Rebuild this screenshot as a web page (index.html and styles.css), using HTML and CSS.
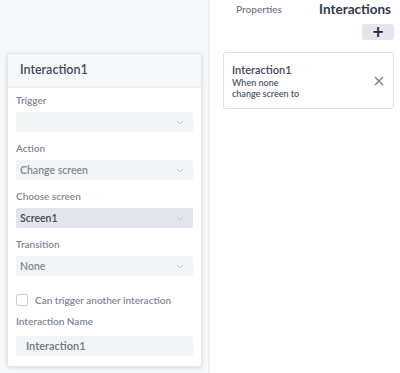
FILE: index.html
```html
<!DOCTYPE html>
<html lang="en">
<head>
  <meta charset="UTF-8">
  <title>Interactions</title>
  <link rel="stylesheet" href="styles.css">
</head>
<body>
  <div class="canvas">
    <div class="popup">
      <div class="popup-header">Interaction1</div>
      <div class="popup-body">
        <div class="field-label">Trigger</div>
        <div class="select"><span></span><svg class="chev" width="8" height="5" viewBox="0 0 8 5"><path d="M1 1l3 3 3-3" fill="none" stroke="#c3c9d0" stroke-width="1"/></svg></div>

        <div class="field-label">Action</div>
        <div class="select"><span>Change screen</span><svg class="chev" width="8" height="5" viewBox="0 0 8 5"><path d="M1 1l3 3 3-3" fill="none" stroke="#c3c9d0" stroke-width="1"/></svg></div>

        <div class="field-label">Choose screen</div>
        <div class="select active"><span>Screen1</span><svg class="chev" width="8" height="5" viewBox="0 0 8 5"><path d="M1 1l3 3 3-3" fill="none" stroke="#c3c9d0" stroke-width="1"/></svg></div>

        <div class="field-label">Transition</div>
        <div class="select"><span>None</span><svg class="chev" width="8" height="5" viewBox="0 0 8 5"><path d="M1 1l3 3 3-3" fill="none" stroke="#c3c9d0" stroke-width="1"/></svg></div>

        <label class="check-row"><span class="checkbox"></span>Can trigger another interaction</label>

        <div class="field-label name-label">Interaction Name</div>
        <div class="text-input">Interaction1</div>
      </div>
    </div>
  </div>

  <div class="sidebar">
    <div class="tabs">
      <span class="tab">Properties</span>
      <span class="tab current">Interactions</span>
    </div>
    <div class="add-row">
      <button class="add-btn">+</button>
    </div>
    <div class="interaction-card">
      <div class="card-text">
        <div class="card-title">Interaction1</div>
        <div class="card-sub">When none</div>
        <div class="card-sub">change screen to</div>
      </div>
      <svg class="close" width="10" height="10" viewBox="0 0 10 10"><path d="M1 1l8 8M9 1l-8 8" stroke="#7d8896" stroke-width="1.6"/></svg>
    </div>
  </div>
</body>
</html>
```

FILE: styles.css
```css
/* Global */
body {
  margin: 0;
  font-family: "Lato", "Open Sans", sans-serif;
  display: flex;
  height: 373px;
  overflow: hidden;
  background: #fff;
}

.canvas {
  width: 201px;
  padding: 53px 0 0 7px;
  background-color: #f7f8fa;
  border-right: 2px solid #eceef1;
}

.popup {
  width: 195px;
  height: 314px;
  box-sizing: border-box;
  background: #fff;
  border: 1px solid #e4e6ea;
  box-shadow: 0 1px 4px rgba(0, 0, 0, 0.12);
  border-radius: 2px;
}

.popup-header {
  height: 32px;
  line-height: 32px;
  padding-left: 12px;
  font-size: 12.5px;
  font-weight: 600;
  color: #3f4a5a;
  background: #f7f8fa;
  border-bottom: 2px solid #eceef1;
}

.popup-body {
  padding: 4px 8px 0 8px;
}

.field-label {
  font-size: 10px;
  line-height: 16px;
  font-weight: 600;
  color: #7d8897;
  margin-bottom: 4px;
}

.name-label {
  margin-bottom: 7px;
}

.select {
  height: 20px;
  background: #f3f4f6;
  border-radius: 2px;
  display: flex;
  align-items: center;
  justify-content: space-between;
  padding: 0 9px 0 4px;
  margin-bottom: 8px;
  font-size: 10.5px;
  font-weight: 600;
  color: #7d8897;
}

.select.active {
  background: #e2e5e9;
  color: #3f4a5a;
}

.check-row {
  display: flex;
  align-items: center;
  gap: 7px;
  font-size: 10px;
  line-height: 16px;
  font-weight: 600;
  color: #7d8897;
  margin: 16px 0 5px 0;
}

.checkbox {
  width: 10px;
  height: 10px;
  border: 1px solid #c9ced4;
  border-radius: 2px;
  background: #fff;
}

.text-input {
  height: 20px;
  line-height: 20px;
  background: #f3f4f6;
  border-radius: 2px;
  padding-left: 10px;
  font-size: 11px;
  font-weight: 600;
  color: #6d7888;
}

/* Sidebar */
.sidebar {
  flex: 1;
  background: #fff;
  padding: 0 6px 0 13px;
}

.tabs {
  display: flex;
  align-items: center;
  justify-content: space-between;
  height: 18px;
  padding: 0 3px 0 13px;
}

.tab {
  font-size: 10px;
  font-weight: 600;
  color: #6f7b8b;
}

.tab.current {
  font-size: 13.5px;
  font-weight: 700;
  color: #2f3a4b;
}

.add-row {
  display: flex;
  justify-content: flex-end;
  margin-top: 6px;
}

.add-btn {
  width: 32px;
  height: 16px;
  border: none;
  border-radius: 3px;
  background: #e3e6ea;
  color: #1f2937;
  font-size: 15px;
  font-weight: 700;
  line-height: 16px;
  padding: 0;
  font-family: "DejaVu Sans", sans-serif;
}

.interaction-card {
  margin-top: 12px;
  height: 57px;
  box-sizing: border-box;
  border: 1px solid #dcdfe3;
  border-radius: 3px;
  display: flex;
  align-items: center;
  justify-content: space-between;
  padding: 0 9px 0 8px;
}

.card-title {
  font-size: 11px;
  line-height: 14px;
  font-weight: 600;
  color: #3f4a5a;
}

.card-sub {
  font-size: 9px;
  line-height: 11px;
  font-weight: 600;
  color: #4c5767;
}
```
